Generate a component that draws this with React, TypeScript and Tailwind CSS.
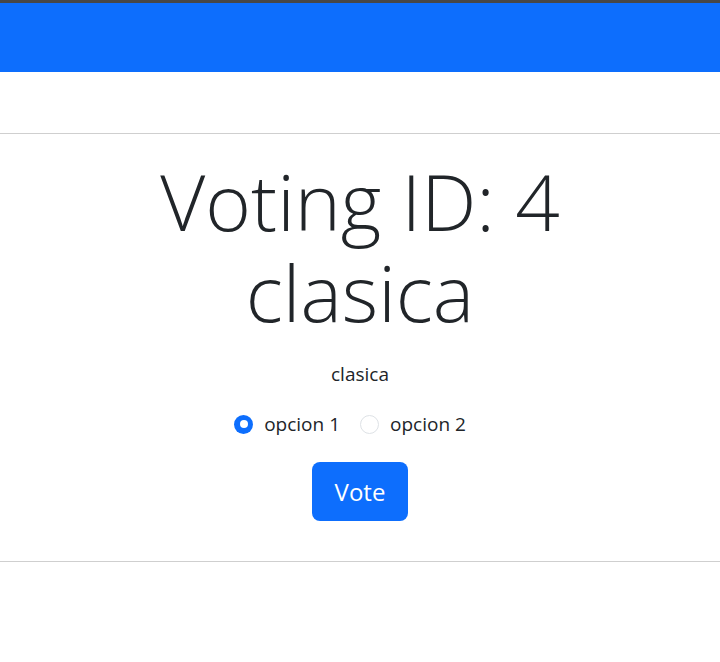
import React, { useState } from 'react';

const options = ['opcion 1', 'opcion 2'];

// Radio option, bootstrap-like look
const RadioOption = ({ label, checked, onSelect }) => (
  <label className="inline-flex items-center mr-[20px] cursor-pointer" onClick={onSelect}>
    <span
      className={`w-[19px] h-[19px] rounded-full flex items-center justify-center ${
        checked ? 'bg-[#0d6efd]' : 'bg-white border border-[#dee2e6]'
      }`}
    >
      {checked && <span className="w-[8px] h-[8px] rounded-full bg-white" />}
    </span>
    <span className="ml-[11px] text-[19px] leading-[30px] text-[#212529]">{label}</span>
  </label>
);

export default function App() {
  const [selected, setSelected] = useState(0);

  return (
    <div className="min-h-[662px] bg-white" style={{ fontFamily: '"Open Sans", "Noto Sans", sans-serif' }}>
      {/* window edge + navbar */}
      <div className="h-[3px] bg-[#474747]" />
      <nav className="h-[69px] bg-[#0d6efd]" />

      <div className="h-[61px]" />
      <hr className="border-0 border-t border-[#cfcfcf]" />

      {/* Voting */}
      <div className="flex flex-col items-center">
        <h1 className="mt-[22px] flex flex-col items-center font-light text-[#212529] text-[78px]">
          <span className="block leading-[91px]">Voting ID: 4</span>
          <span className="block leading-[91px]">clasica</span>
        </h1>
        <p className="mt-[21px] text-[19px] leading-[30px] text-[#212529]">clasica</p>
        <div className="mt-[20px] flex items-center">
          {options.map((opt, i) => (
            <RadioOption key={opt} label={opt} checked={selected === i} onSelect={() => setSelected(i)} />
          ))}
        </div>
        <button className="mt-[23px] w-[96px] h-[59px] rounded-[8px] bg-[#0d6efd] text-white text-[24px] leading-none">
          Vote
        </button>
      </div>

      <div className="h-[40px]" />
      <hr className="border-0 border-t border-[#cfcfcf]" />
    </div>
  );
}
